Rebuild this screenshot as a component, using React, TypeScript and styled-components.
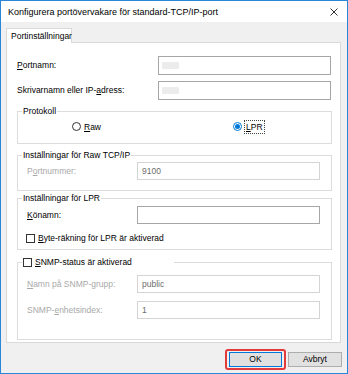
import React from "react";
import styled, { createGlobalStyle } from "styled-components";

const GlobalStyle = createGlobalStyle`
  html, body {
    margin: 0;
    padding: 0;
    background: #ffffff;
  }
  * {
    box-sizing: border-box;
  }
`;

const Window = styled.div`
  width: 348px;
  height: 374px;
  border: 1px solid #2b86d9;
  background: #f0f0f0;
  display: flex;
  flex-direction: column;
  font-family: "Liberation Sans", Arial, sans-serif;
  font-size: 8.5px;
  color: #000;
`;

const TitleBar = styled.div`
  height: 21px;
  background: #fff;
  display: flex;
  align-items: center;
  justify-content: space-between;
  padding: 0 9px 0 7px;
  font-size: 9px;
  flex-shrink: 0;
`;

const Content = styled.div`
  padding: 6px 5px 0 5px;
  display: flex;
  flex-direction: column;
`;

const TabStrip = styled.div`
  display: flex;
  height: 14px;
  position: relative;
  z-index: 1;
`;

const Tab = styled.div`
  width: 66px;
  height: 15px;
  background: #fff;
  border: 1px solid #d9d9d9;
  border-bottom: none;
  padding: 2px 0 0 4px;
  line-height: 11px;
`;

const Panel = styled.div`
  width: 335px;
  height: 301px;
  background: #fff;
  border: 1px solid #d9d9d9;
  padding: 13px 9px 0 9px;
  display: flex;
  flex-direction: column;
`;

const FieldRow = styled.div<{ $gap?: number }>`
  display: grid;
  grid-template-columns: 1fr 173px;
  align-items: center;
  margin-top: ${(p) => p.$gap ?? 0}px;
`;

const GroupRow = styled.div<{ $gap?: number }>`
  display: grid;
  grid-template-columns: 1fr 183px;
  align-items: center;
  margin-top: ${(p) => p.$gap ?? 0}px;
`;

const Label = styled.span<{ $disabled?: boolean }>`
  color: ${(p) => (p.$disabled ? "#a9a9a9" : "#000")};
  line-height: 11px;
  padding-left: 1px;
`;

const Key = styled.span`
  text-decoration: underline;
  text-underline-offset: 1px;
`;

const Input = styled.div<{ $disabled?: boolean; $h?: number }>`
  height: ${(p) => p.$h ?? 19}px;
  border: 1px solid ${(p) => (p.$disabled ? "#d4d4d4" : "#a6a6a6")};
  background: #fff;
  color: ${(p) => (p.$disabled ? "#6d6d6d" : "#000")};
  display: flex;
  align-items: center;
  padding-left: 4px;
  font-size: 8.5px;
`;

const Redacted = styled.span`
  width: 17px;
  height: 7px;
  background: #ececec;
  border-radius: 1px;
  margin-left: -1px;
`;

const Group = styled.fieldset<{ $gap?: number; $h: number }>`
  margin: ${(p) => p.$gap ?? 0}px 0 0 1px;
  width: 315px;
  height: ${(p) => p.$h}px;
  border: 1px solid #dcdcdc;
  padding: 0 11px 0 8px;
  min-width: 0;
`;

const Legend = styled.legend<{ $w?: number }>`
  margin-left: -4px;
  padding: 0 1px;
  line-height: 11px;
  width: ${(p) => (p.$w ? `${p.$w}px` : "auto")};
  display: flex;
  align-items: center;
`;

const RadioRow = styled.div`
  display: grid;
  grid-template-columns: 161px 1fr;
  padding-left: 46px;
  margin-top: 3px;
  height: 13px;
  align-items: center;
`;

const Choice = styled.label`
  display: flex;
  align-items: center;
  gap: 3px;
`;

const RadioDot = styled.span<{ $checked?: boolean }>`
  width: 9px;
  height: 9px;
  border-radius: 50%;
  border: 1px solid ${(p) => (p.$checked ? "#0078d7" : "#333")};
  display: flex;
  align-items: center;
  justify-content: center;
  &::after {
    content: "";
    width: 5px;
    height: 5px;
    border-radius: 50%;
    background: ${(p) => (p.$checked ? "#0078d7" : "transparent")};
  }
`;

const Focused = styled.span`
  outline: 1px dotted #444;
  outline-offset: 0;
  padding: 1px 1px;
  line-height: 10px;
`;

const CheckBox = styled.span`
  width: 9px;
  height: 9px;
  border: 1px solid #333;
  background: #fff;
  flex-shrink: 0;
`;

const CheckRow = styled.label<{ $gap?: number }>`
  display: flex;
  align-items: center;
  gap: 3px;
  margin-top: ${(p) => p.$gap ?? 0}px;
  line-height: 11px;
`;

const Footer = styled.div`
  display: flex;
  justify-content: flex-end;
  align-items: center;
  padding: 6px 0 0 0;
  gap: 2px;
`;

const Highlight = styled.div`
  border: 2px solid #e23b3b;
  border-radius: 3px;
  padding: 1px 2px;
`;

const Button = styled.button<{ $default?: boolean }>`
  width: ${(p) => (p.$default ? 53 : 54)}px;
  height: 15px;
  border: 1px solid ${(p) => (p.$default ? "#0078d7" : "#adadad")};
  background: #e1e1e1;
  font-family: "Liberation Sans", Arial, sans-serif;
  font-size: 8.5px;
  color: #000;
  padding: 0;
  line-height: 13px;
`;

const CloseIcon = () => (
  <svg width="8" height="8" viewBox="0 0 8 8">
    <path d="M0.5 0.5 L7.5 7.5 M7.5 0.5 L0.5 7.5" stroke="#333" strokeWidth="1" />
  </svg>
);

export default function App() {
  return (
    <>
      <GlobalStyle />
      <Window>
        <TitleBar>
          <span>Konfigurera portövervakare för standard-TCP/IP-port</span>
          <CloseIcon />
        </TitleBar>
        <Content>
          <TabStrip>
            <Tab>Portinställningar</Tab>
          </TabStrip>
          <Panel>
            <FieldRow>
              <Label>
                <Key>P</Key>ortnamn:
              </Label>
              <Input>
                <Redacted />
              </Input>
            </FieldRow>
            <FieldRow $gap={6}>
              <Label>
                Skrivarnamn eller IP-<Key>a</Key>dress:
              </Label>
              <Input>
                <Redacted />
              </Input>
            </FieldRow>

            <Group $gap={6} $h={38}>
              <Legend>Protokoll</Legend>
              <RadioRow>
                <Choice>
                  <RadioDot />
                  <span>
                    <Key>R</Key>aw
                  </span>
                </Choice>
                <Choice>
                  <RadioDot $checked />
                  <Focused>
                    <Key>L</Key>PR
                  </Focused>
                </Choice>
              </RadioRow>
            </Group>

            <Group $gap={6} $h={41}>
              <Legend>Inställningar för Raw TCP/IP</Legend>
              <GroupRow $gap={1}>
                <Label $disabled>
                  P<Key>o</Key>rtnummer:
                </Label>
                <Input $disabled $h={18}>
                  9100
                </Input>
              </GroupRow>
            </Group>

            <Group $gap={2} $h={57}>
              <Legend>Inställningar för LPR</Legend>
              <GroupRow $gap={2}>
                <Label>
                  <Key>K</Key>önamn:
                </Label>
                <Input $h={18} />
              </GroupRow>
              <CheckRow $gap={9}>
                <CheckBox />
                <span>
                  <Key>B</Key>yte-räkning för LPR är aktiverad
                </span>
              </CheckRow>
            </Group>

            <Group $gap={7} $h={83}>
              <Legend $w={152}>
                <CheckBox />
                <span style={{ marginLeft: 3 }}>
                  <Key>S</Key>NMP-status är aktiverad
                </span>
              </Legend>
              <GroupRow $gap={7}>
                <Label $disabled>
                  <Key>N</Key>amn på SNMP-grupp:
                </Label>
                <Input $disabled $h={18}>
                  public
                </Input>
              </GroupRow>
              <GroupRow $gap={8}>
                <Label $disabled>
                  SNMP-<Key>e</Key>nhetsindex:
                </Label>
                <Input $disabled $h={18}>
                  1
                </Input>
              </GroupRow>
            </Group>
          </Panel>
          <Footer>
            <Highlight>
              <Button $default>OK</Button>
            </Highlight>
            <Button>Avbryt</Button>
          </Footer>
        </Content>
      </Window>
    </>
  );
}
